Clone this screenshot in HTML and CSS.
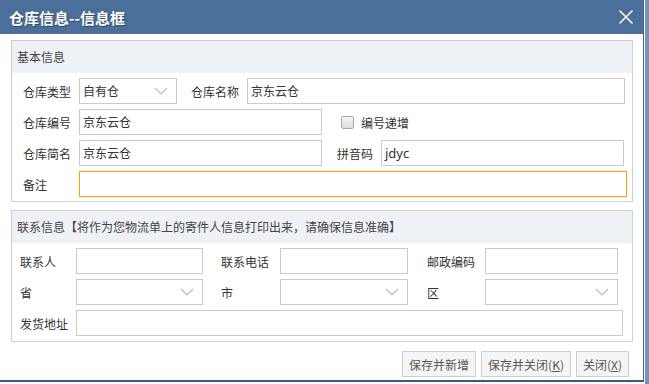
FILE: index.html
```html
<!DOCTYPE html>
<html lang="zh-CN">
<head>
    <meta charset="UTF-8">
    <title>仓库信息--信息框</title>
    <link rel="stylesheet" href="styles.css">
</head>
<body>
    <div class="dialog">
        <div class="titlebar">
            <span class="title">仓库信息--信息框</span>
            <svg class="close" width="16" height="16" viewBox="0 0 16 16">
                <path d="M1.5 1.5 L14.5 14.5 M14.5 1.5 L1.5 14.5" stroke="#fff" stroke-width="1.5" fill="none"/>
            </svg>
        </div>

        <div class="content">
            <div class="panel">
                <div class="panel-head">基本信息</div>
                <div class="panel-body first">
                    <div class="row">
                        <span class="lbl w56">仓库类型</span>
                        <div class="select w98">自有仓
                            <svg class="arrow" width="14" height="8" viewBox="0 0 14 8"><path d="M1 1 L7 7 L13 1" stroke="#bbb" stroke-width="1.2" fill="none"/></svg>
                        </div>
                        <span class="lbl w56 ml14">仓库名称</span>
                        <div class="input w378">京东云仓</div>
                    </div>
                    <div class="row">
                        <span class="lbl w56">仓库编号</span>
                        <div class="input w243">京东云仓</div>
                        <span class="check"></span>
                        <span class="lbl">编号递增</span>
                    </div>
                    <div class="row">
                        <span class="lbl w56">仓库简名</span>
                        <div class="input w243">京东云仓</div>
                        <span class="lbl w44 ml15">拼音码</span>
                        <div class="input w243 latin">jdyc</div>
                    </div>
                    <div class="row">
                        <span class="lbl w56">备注</span>
                        <div class="input w548 focus"></div>
                    </div>
                </div>
            </div>

            <div class="panel second">
                <div class="panel-head">联系信息【将作为您物流单上的寄件人信息打印出来，请确保信息准确】</div>
                <div class="panel-body">
                    <div class="row">
                        <span class="lbl w56">联系人</span>
                        <div class="input w127"></div>
                        <span class="lbl w59 ml18">联系电话</span>
                        <div class="input w128"></div>
                        <span class="lbl w58 ml19">邮政编码</span>
                        <div class="input w133"></div>
                    </div>
                    <div class="row">
                        <span class="lbl w56">省</span>
                        <div class="select w127">
                            <svg class="arrow" width="14" height="8" viewBox="0 0 14 8"><path d="M1 1 L7 7 L13 1" stroke="#bbb" stroke-width="1.2" fill="none"/></svg>
                        </div>
                        <span class="lbl w59 ml18">市</span>
                        <div class="select w128">
                            <svg class="arrow" width="14" height="8" viewBox="0 0 14 8"><path d="M1 1 L7 7 L13 1" stroke="#bbb" stroke-width="1.2" fill="none"/></svg>
                        </div>
                        <span class="lbl w58 ml19">区</span>
                        <div class="select w133">
                            <svg class="arrow" width="14" height="8" viewBox="0 0 14 8"><path d="M1 1 L7 7 L13 1" stroke="#bbb" stroke-width="1.2" fill="none"/></svg>
                        </div>
                    </div>
                    <div class="row">
                        <span class="lbl w56">发货地址</span>
                        <div class="input w547"></div>
                    </div>
                </div>
            </div>

            <div class="buttons">
                <button class="btn">保存并新增</button>
                <button class="btn">保存并关闭(<u>K</u>)</button>
                <button class="btn">关闭(<u>X</u>)</button>
            </div>
        </div>
    </div>
</body>
</html>
```

FILE: styles.css
```css
html {
    background-color: #fff;
}

body {
    margin: 0;
    padding: 0;
    font-family: "Noto Sans CJK SC", "Liberation Sans", sans-serif;
    font-size: 12px;
    color: #333;
    background: linear-gradient(to right, #fff 645px, #7593bb 645px);
    height: 384px;
}

.dialog {
    width: 643px;
    height: 380px;
    background-color: #fff;
    border-right: 1px solid #3f5f88;
    border-bottom: 2px solid #3a5a84;
}

.titlebar {
    height: 34px;
    background-color: #4a6f9a;
    display: flex;
    align-items: center;
    justify-content: space-between;
    padding: 0 9px;
}

.title {
    color: #fff;
    font-size: 15px;
    font-weight: bold;
    text-shadow: 1px 1px 1px rgba(0, 0, 0, 0.35);
}

.content {
    padding: 6px 10px 0 11px;
}

.panel {
    border: 1px solid #cfcfcf;
    width: 620px;
}

.panel.second {
    margin-top: 8px;
}

.panel-head {
    height: 32px;
    line-height: 32px;
    background-color: #eef1f5;
    padding-left: 5px;
    color: #444;
}

.panel-body {
    padding: 5px 0 5px 8px;
}

.panel-body.first {
    padding: 5px 0 4px 11px;
}

.row {
    display: flex;
    align-items: center;
    height: 26px;
    margin-bottom: 5px;
}

.row:last-child {
    margin-bottom: 0;
}

.lbl {
    flex: none;
    color: #333;
}

.input, .select {
    flex: none;
    box-sizing: border-box;
    height: 26px;
    border: 1px solid #cbcbcb;
    line-height: 24px;
    padding-left: 3px;
    color: #333;
    background-color: #fff;
}

.select {
    position: relative;
}

.arrow {
    position: absolute;
    right: 8px;
    top: 8px;
}

.input.latin {
    font-family: "Noto Sans", "Liberation Sans", sans-serif;
    font-size: 13px;
}

.input.focus {
    border-color: #f5a516;
    box-shadow: 0 0 2px rgba(245, 165, 22, 0.3);
}

.check {
    flex: none;
    box-sizing: border-box;
    width: 13px;
    height: 13px;
    border: 1px solid #aaa;
    border-radius: 2px;
    background: linear-gradient(#f4f4f4, #dcdcdc);
    margin-left: 19px;
    margin-right: 7px;
}

.w44 { width: 44px; }
.w56 { width: 56px; }
.w58 { width: 58px; }
.w59 { width: 59px; }
.w98 { width: 98px; }
.w127 { width: 127px; }
.w128 { width: 128px; }
.w133 { width: 133px; }
.w243 { width: 243px; }
.w378 { width: 378px; }
.w547 { width: 547px; }
.w548 { width: 548px; }

.ml14 { margin-left: 14px; }
.ml15 { margin-left: 15px; }
.ml18 { margin-left: 18px; }
.ml19 { margin-left: 19px; }

.buttons {
    display: flex;
    justify-content: flex-end;
    gap: 5px;
    margin-top: 9px;
    padding-right: 4px;
}

.btn {
    height: 26px;
    padding: 0 6px;
    border: 1px solid #cfcfcf;
    background-color: #f5f5f5;
    color: #555;
    font-family: "Noto Sans CJK SC", "Liberation Sans", sans-serif;
    font-size: 12px;
    border-radius: 0;
}
```
